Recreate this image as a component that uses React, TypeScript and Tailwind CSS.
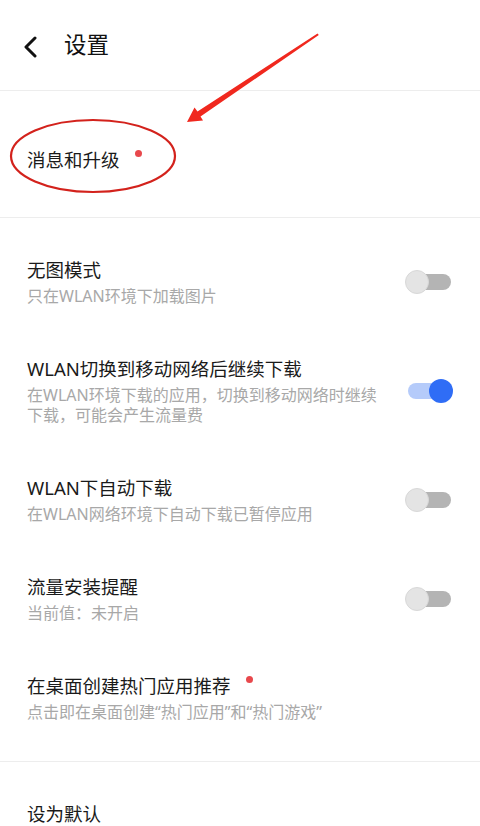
import React from "react";

const font = { fontFamily: '"Noto Sans", "Noto Sans CJK SC", sans-serif' };

function Toggle({ on }: { on: boolean }) {
  return (
    <div className="relative w-[48px] h-[24px] shrink-0">
      <div
        className={
          on
            ? "absolute left-[3px] right-[6px] top-[4px] h-[16px] rounded-full bg-[#b5cbfa]"
            : "absolute left-[3px] right-[2px] top-[4px] h-[16px] rounded-full bg-[#b4b4b4]"
        }
      />
      <div
        className={
          on
            ? "absolute right-0 top-0 w-[24px] h-[24px] rounded-full bg-[#2f6df6]"
            : "absolute left-0 top-0 w-[24px] h-[24px] rounded-full bg-[#e4e4e4] border border-[#d8d8d8]"
        }
      />
    </div>
  );
}

function Dot() {
  return <span className="absolute -right-[22px] top-[3px] w-[7px] h-[7px] rounded-full bg-[#e8484c]" />;
}

function Row({
  title,
  sub,
  toggle,
  dot,
}: {
  title: string;
  sub: string;
  toggle?: boolean | null;
  dot?: boolean;
}) {
  return (
    <div className="flex items-center pl-[27px] pr-[27px] pt-[25px] pb-[25px]">
      <div className="flex-1 min-w-0 pr-[24px]">
        <div className="text-[18.5px] leading-[25px] text-[#1a1a1a]">
          <span className="relative">
            {title}
            {dot && <Dot />}
          </span>
        </div>
        <div className="mt-[4px] text-[16px] leading-[20px] text-[#a8a8a8]">{sub}</div>
      </div>
      {toggle !== undefined && toggle !== null && <Toggle on={toggle} />}
    </div>
  );
}

export default function App() {
  return (
    <div className="relative w-[480px] h-[826px] overflow-hidden bg-white" style={font}>
      {/* Header */}
      <div className="h-[90px] flex items-center pl-[23px]">
        <svg width="14" height="22" viewBox="0 0 14 22" className="mt-[4px]">
          <polyline
            points="12,2 3,11 12,20"
            fill="none"
            stroke="#111"
            strokeWidth="3"
            strokeLinecap="round"
            strokeLinejoin="round"
          />
        </svg>
        <div className="ml-[27px] text-[22.5px] text-[#111] leading-none">设置</div>
      </div>
      <div className="h-px bg-[#ededed]" />

      {/* 消息和升级 */}
      <div className="h-[126px] flex items-center pl-[27px] pt-[10px]">
        <div className="text-[18.5px] leading-[25px] text-[#1a1a1a]">
          <span className="relative">
            消息和升级
            <Dot />
          </span>
        </div>
      </div>
      <div className="h-px bg-[#ededed]" />

      {/* Options */}
      <div className="pt-[14px] pb-[14px]">
        <Row title="无图模式" sub="只在WLAN环境下加载图片" toggle={false} />
        <Row
          title="WLAN切换到移动网络后继续下载"
          sub="在WLAN环境下载的应用，切换到移动网络时继续下载，可能会产生流量费"
          toggle={true}
        />
        <Row title="WLAN下自动下载" sub="在WLAN网络环境下自动下载已暂停应用" toggle={false} />
        <Row title="流量安装提醒" sub="当前值：未开启" toggle={false} />
        <Row title="在桌面创建热门应用推荐" sub="点击即在桌面创建“热门应用”和“热门游戏”" dot />
      </div>
      <div className="h-px bg-[#ededed]" />

      <div className="pt-[14px]">
        <div className="pl-[27px] pt-[25px] text-[18.5px] leading-[25px] text-[#1a1a1a]">设为默认</div>
      </div>

      {/* Annotation overlay */}
      <svg className="absolute left-0 top-0 pointer-events-none" width="480" height="826" viewBox="0 0 480 826">
        <ellipse cx="93" cy="156" rx="82" ry="36" fill="none" stroke="#d3221c" strokeWidth="2.2" />
        <polygon
          points="187,122 194.5,107.5 197.5,111.5 317.5,33.5 318.8,35 200.5,116.5 203,120.5"
          fill="#f0281e"
        />
      </svg>
    </div>
  );
}
